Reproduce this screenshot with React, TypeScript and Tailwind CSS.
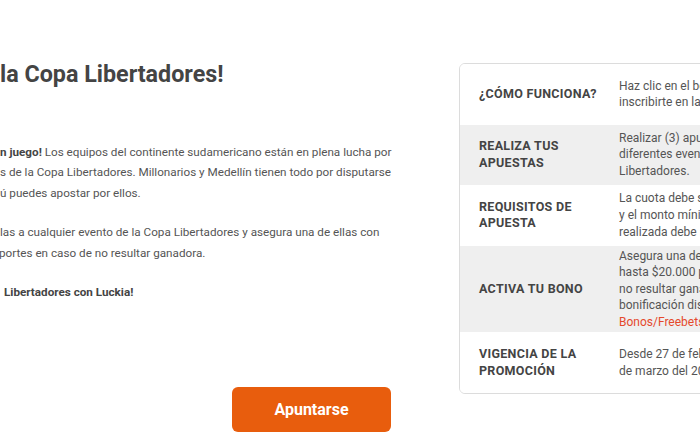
const rows: { label: string[]; text: React.ReactNode[]; shade?: boolean }[] = [
  {
    label: ["¿CÓMO FUNCIONA?"],
    text: ["Haz clic en el botón “Apuntarse” para", "inscribirte en la promoción."],
  },
  {
    label: ["REALIZA TUS", "APUESTAS"],
    text: ["Realizar (3) apuestas sencillas a", "diferentes eventos de la Copa", "Libertadores."],
    shade: true,
  },
  {
    label: ["REQUISITOS DE", "APUESTA"],
    text: ["La cuota debe ser mínimo de 1.50", "y el monto mínimo de cada apuesta", "realizada debe ser de $5.000."],
  },
  {
    label: ["ACTIVA TU BONO"],
    text: [
      "Asegura una de tus apuestas",
      "hasta $20.000 para Deportes en caso de",
      "no resultar ganadora. Encuentra tu",
      "bonificación disponible en la sección",
      <span key="l" className="text-[#e5492c]">Bonos/Freebets</span>,
    ],
    shade: true,
  },
  {
    label: ["VIGENCIA DE LA", "PROMOCIÓN"],
    text: ["Desde 27 de febrero hasta el 31", "de marzo del 2023."],
  },
];

export default function App() {
  return (
    <div className="flex h-[441px] w-[700px] overflow-hidden bg-white font-['Roboto',sans-serif]">
      <div className="flex w-[459px] shrink-0 flex-col">
        <h1 className="mt-[59px] whitespace-nowrap text-[23.3px] font-bold leading-[30px] text-[#444]">
          la Copa Libertadores!
        </h1>
        <div className="mt-[53px] whitespace-nowrap text-[11.7px] leading-[20.4px] text-[#555]">
          <div>
            <b className="text-[#444]">n juego!</b> Los equipos del continente sudamericano están en plena lucha por
          </div>
          <div>s de la Copa Libertadores. Millonarios y Medellín tienen todo por disputarse</div>
          <div>ú puedes apostar por ellos.</div>
          <div className="mt-[19px]">las a cualquier evento de la Copa Libertadores y asegura una de ellas con</div>
          <div className="-ml-[1px]">portes en caso de no resultar ganadora.</div>
          <div className="mt-[19px] pl-[4px] font-bold text-[#444]">Libertadores con Luckia!</div>
        </div>
        <button className="ml-[232px] mt-[85px] h-[45px] w-[159px] rounded-[6px] bg-[#e85d0d] text-[16px] font-bold text-white">
          Apuntarse
        </button>
      </div>
      <div className="mt-[63px] h-fit w-[320px] shrink-0 overflow-hidden rounded-[6px] border border-[#dcdcdc]">
        {rows.map((r, i) => (
          <div
            key={i}
            className={`flex min-h-[60.5px] items-center py-[2px] ${r.shade ? "bg-[#efefef]" : "bg-white"}`}
          >
            <div className="w-[159px] shrink-0 pl-[19px] text-[12.5px] font-bold leading-[16.6px] tracking-[0.3px] text-[#444]">
              {r.label.map((l, j) => (
                <div key={j}>{l}</div>
              ))}
            </div>
            <div className="whitespace-nowrap text-[12px] leading-[16.6px] text-[#555]">
              {r.text.map((t, j) => (
                <div key={j}>{t}</div>
              ))}
            </div>
          </div>
        ))}
      </div>
    </div>
  );
}
